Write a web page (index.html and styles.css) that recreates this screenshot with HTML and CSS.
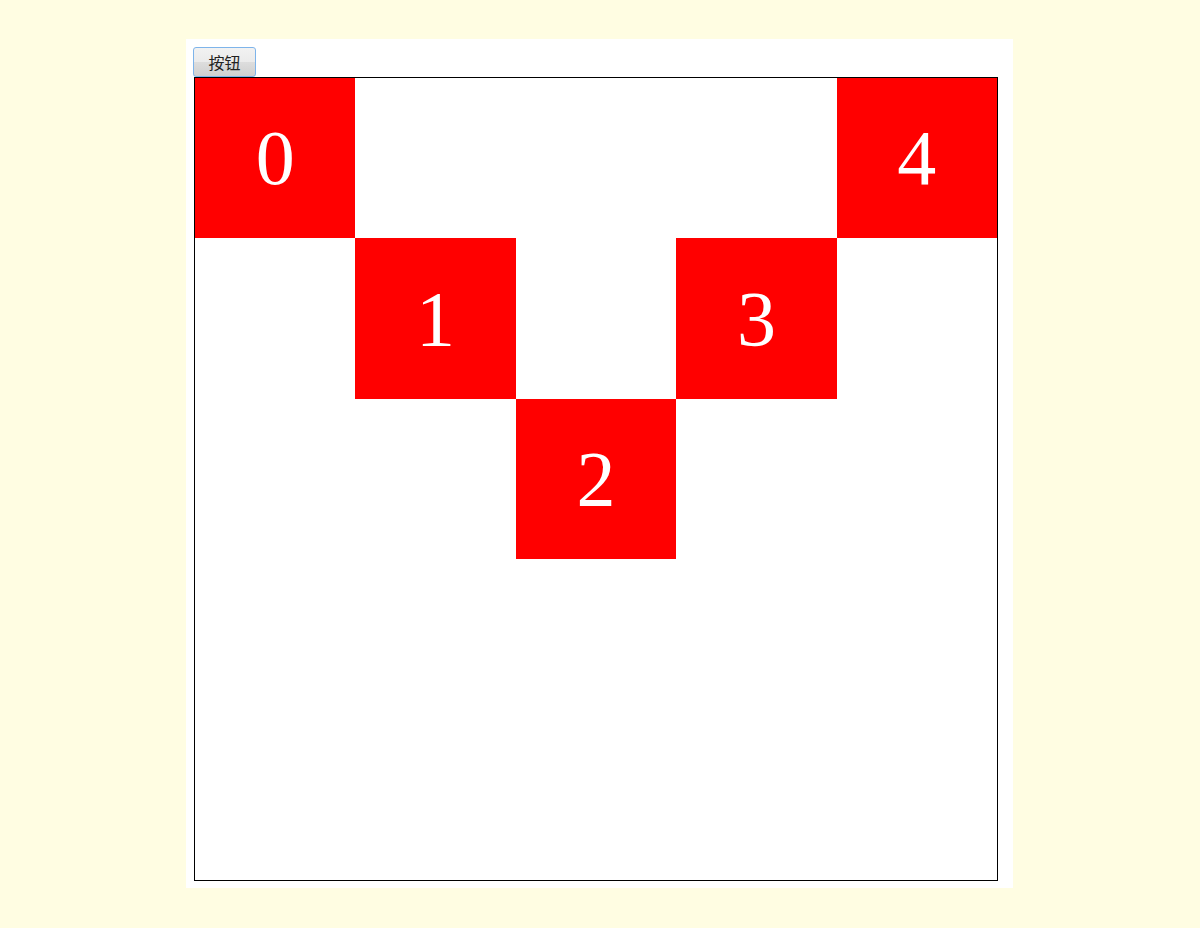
FILE: index.html
```html
<!DOCTYPE html>
<html lang="zh-CN">
<head>
<meta charset="utf-8">
<title>按钮</title>
<link rel="stylesheet" href="styles.css">
</head>
<body>
<div class="panel">
  <button class="btn" type="button">按钮</button>
  <div class="board">
    <div class="cell c0">0</div>
    <div class="cell c1">1</div>
    <div class="cell c2">2</div>
    <div class="cell c3">3</div>
    <div class="cell c4">4</div>
  </div>
</div>
</body>
</html>
```

FILE: styles.css
```css
html, body {
  margin: 0;
  padding: 0;
  background: #fffde2;
}

.panel {
  width: 827px;
  height: 849px;
  margin: 39px 0 0 186px;
  box-sizing: border-box;
  padding: 8px 0 0 7px;
  background: #ffffff;
}

.btn {
  display: block;
  box-sizing: border-box;
  width: 63px;
  height: 30px;
  margin: 0;
  padding: 0;
  border: 1px solid #7eb4ea;
  border-radius: 3px;
  background: linear-gradient(#f2f2f2 0%, #ebebeb 50%, #dddddd 51%, #cfcfcf 100%);
  font-family: "Noto Sans CJK SC", sans-serif;
  font-size: 16px;
  color: #222;
  line-height: 28px;
}

.board {
  box-sizing: border-box;
  width: 804px;
  height: 804px;
  margin-left: 1px;
  border: 1px solid #000;
  display: grid;
  grid-template-columns: repeat(5, 1fr);
  grid-template-rows: repeat(5, 1fr);
}

.cell {
  background: #ff0000;
  color: #ffffff;
  font-family: "Liberation Serif", serif;
  font-size: 78px;
  display: flex;
  align-items: center;
  justify-content: center;
}

.c0 { grid-column: 1; grid-row: 1; }
.c1 { grid-column: 2; grid-row: 2; }
.c2 { grid-column: 3; grid-row: 3; }
.c3 { grid-column: 4; grid-row: 2; }
.c4 { grid-column: 5; grid-row: 1; }
```
